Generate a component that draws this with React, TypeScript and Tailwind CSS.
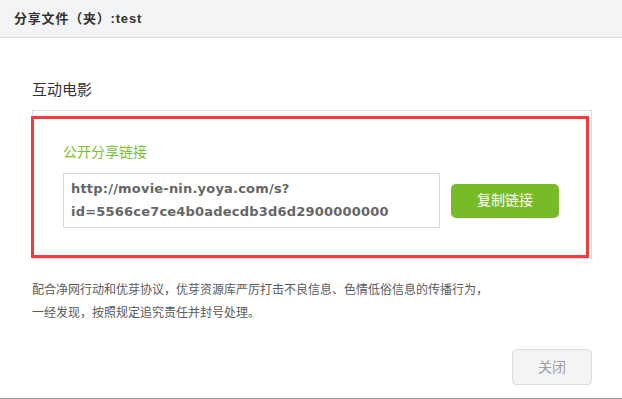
export default function App() {
    return (
        <div className="relative w-[622px] h-[399px] bg-white border-b border-[#999] font-['Liberation_Sans','Noto_Sans_CJK_SC',sans-serif] overflow-hidden">
            {/* header */}
            <div className="h-[38px] bg-[#f3f4f5] border-b border-[#dcdcdc] flex items-center pl-[14px]">
                <span className="text-[13px] font-bold text-[#333] tracking-[0.8px]">分享文件（夹）:test</span>
            </div>

            <div className="pl-[32px] pr-[30px] pt-[42px]">
                <h2 className="text-[15px] leading-[20px] text-[#333]">互动电影</h2>

                <div className="mt-[10px] border border-[#dddddd] pl-[30px] pt-[31px] pb-[30px]">
                    <p className="text-[14px] leading-[20px] text-[#7cbd31]">公开分享链接</p>
                    <div className="mt-[11px] flex items-center">
                        <div className="w-[377px] h-[55px] border border-[#d9d9d9] pl-[7px] pt-[3px] font-['DejaVu_Sans',sans-serif] font-bold text-[13px] leading-[23px] text-[#666] tracking-[0.2px]">
                            http://movie-nin.yoya.com/s?
                            <br />
                            id=5566ce7ce4b0adecdb3d6d2900000000
                        </div>
                        <button className="ml-[11px] w-[108px] h-[34px] rounded-[5px] bg-[#78bb28] text-white text-[14px]">
                            复制链接
                        </button>
                    </div>
                </div>

                <div className="mt-[20px] text-[12px] leading-[23px] text-[#5a5a5a]">
                    <p>配合净网行动和优芽协议，优芽资源库严厉打击不良信息、色情低俗信息的传播行为，</p>
                    <p>一经发现，按照规定追究责任并封号处理。</p>
                </div>

                <div className="mt-[24px] flex justify-end">
                    <button className="w-[80px] h-[36px] rounded-[4px] border border-[#dddddd] bg-[#f4f4f4] text-[14px] text-[#a0a0a0]">
                        关闭
                    </button>
                </div>
            </div>

            {/* highlight annotation */}
            <div className="absolute left-[31px] top-[116px] w-[558px] h-[142px] border-[3px] border-[#f33b3b] pointer-events-none" />
        </div>
    );
}
